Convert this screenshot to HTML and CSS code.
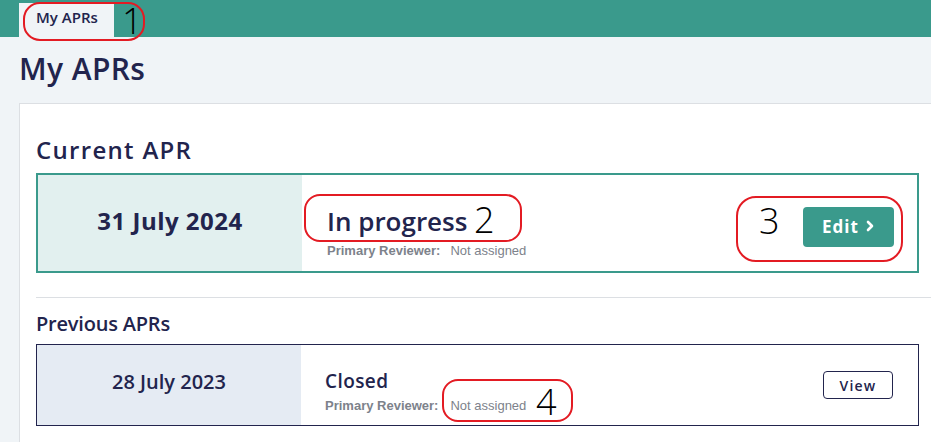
FILE: index.html
```html
<!DOCTYPE html>
<html>
<head>
<meta charset="utf-8">
<link rel="stylesheet" href="styles.css">
</head>
<body>
<header class="topbar">
  <div class="tab">My APRs</div>
  <div class="note note1"><span class="num">1</span></div>
</header>
<main class="page">
  <h1 class="title">My APRs</h1>
  <section class="card">
    <h2 class="section-title">Current APR</h2>
    <div class="apr apr-current">
      <div class="apr-date">31 July 2024</div>
      <div class="apr-info">
        <div class="status status-big">In progress</div>
        <div class="reviewer"><span class="label">Primary Reviewer:</span><span class="value">Not assigned</span></div>
      </div>
      <div class="apr-action">
        <button class="btn-edit">Edit
          <svg class="chev" width="10" height="12" viewBox="0 0 10 12"><path d="M3 2 L7 6 L3 10" fill="none" stroke="#fff" stroke-width="2.6" stroke-linecap="round" stroke-linejoin="round"/></svg>
        </button>
      </div>
      <div class="note note2"><span class="num">2</span></div>
      <div class="note note3"><span class="num">3</span></div>
    </div>
    <hr class="divider">
    <h3 class="sub-title">Previous APRs</h3>
    <div class="apr apr-prev">
      <div class="apr-date">28 July 2023</div>
      <div class="apr-info">
        <div class="status">Closed</div>
        <div class="reviewer"><span class="label">Primary Reviewer:</span><span class="value">Not assigned</span></div>
      </div>
      <div class="apr-action">
        <button class="btn-view">View</button>
      </div>
      <div class="note note4"><span class="num">4</span></div>
    </div>
  </section>
</main>
</body>
</html>
```

FILE: styles.css
```css
html, body {
  margin: 0;
  padding: 0;
}
body {
  background: #f0f4f7;
  font-family: "Open Sans", "DejaVu Sans", sans-serif;
  color: #22244d;
  width: 931px;
  height: 442px;
  overflow: hidden;
}
.topbar {
  position: relative;
  height: 37px;
  background: #3a9a8c;
  padding-left: 19px;
  display: flex;
  align-items: flex-end;
}
.tab {
  background: #f0f4f7;
  height: 34px;
  width: 95px;
  box-sizing: border-box;
  padding: 4px 0 0 17px;
  font-size: 15px;
  line-height: 20px;
  font-weight: 600;
  color: #22244d;
}
.page {
  padding-left: 19px;
}
.title {
  margin: 0;
  padding-top: 12px;
  height: 54px;
  font-size: 30px;
  font-weight: 600;
  line-height: 40px;
  letter-spacing: 0.4px;
}
.card {
  background: #fff;
  border: 1px solid #dcdfe3;
  border-right: none;
  width: 918px;
  box-sizing: border-box;
  padding: 30px 18px 0 16px;
  height: 360px;
}
.section-title {
  margin: 0;
  font-size: 24px;
  font-weight: 600;
  line-height: 32px;
  height: 39px;
  letter-spacing: 1.3px;
}
.apr {
  position: relative;
  display: flex;
  box-sizing: border-box;
}
.apr-current {
  border: 2px solid #3a9a8c;
  height: 100px;
}
.apr-prev {
  border: 1px solid #22244d;
  height: 82px;
}
.apr-date {
  width: 264px;
  flex: none;
  display: flex;
  align-items: center;
  justify-content: center;
}
.apr-current .apr-date {
  background: #e2f0ef;
  font-size: 24px;
  font-weight: 700;
  letter-spacing: 0.5px;
  padding-bottom: 5px;
}
.apr-prev .apr-date {
  background: #e5ebf3;
  font-size: 20px;
  font-weight: 600;
  padding-bottom: 8px;
}
.apr-info {
  flex: 1;
  display: flex;
  flex-direction: column;
}
.apr-current .apr-info {
  padding: 31px 0 0 25px;
}
.apr-prev .apr-info {
  padding: 24px 0 0 24px;
}
.status {
  font-size: 19px;
  font-weight: 600;
  line-height: 24px;
  letter-spacing: 0.4px;
}
.status-big {
  font-size: 26px;
  font-weight: 600;
  line-height: 30px;
  letter-spacing: 0;
}
.reviewer {
  font-family: "Liberation Sans", Arial, sans-serif;
  font-size: 13px;
  color: #7d828b;
  line-height: 16px;
}
.apr-current .reviewer {
  margin-top: 7px;
}
.apr-prev .reviewer {
  margin-top: 5px;
}
.reviewer .label {
  font-weight: 700;
  margin-right: 10px;
}
.apr-prev .reviewer .label {
  margin-right: 12px;
}
.apr-action {
  display: flex;
}
.apr-current .apr-action {
  align-items: flex-start;
  padding: 32px 23px 0 0;
}
.apr-prev .apr-action {
  align-items: center;
  padding-right: 25px;
}
.btn-edit {
  background: #3a9a8c;
  color: #fff;
  border: none;
  border-radius: 4px;
  width: 91px;
  height: 40px;
  font-family: inherit;
  font-size: 17px;
  font-weight: 700;
  letter-spacing: 1px;
  display: flex;
  align-items: center;
  justify-content: center;
  gap: 6px;
  padding: 0 0 2px 0;
}
.btn-view {
  background: #fff;
  color: #22244d;
  border: 1px solid #22244d;
  border-radius: 4px;
  width: 70px;
  height: 28px;
  font-family: inherit;
  font-size: 14px;
  font-weight: 600;
  letter-spacing: 1.2px;
  padding: 0;
}
.divider {
  border: none;
  border-top: 1px solid #dcdfe3;
  margin: 24px -18px 0 0;
}
.sub-title {
  margin: 0;
  padding-top: 13px;
  height: 33px;
  font-size: 20px;
  font-weight: 600;
  line-height: 26px;
  letter-spacing: -0.2px;
}
.note {
  position: absolute;
  border: 2px solid #e31b23;
  border-radius: 16px;
  box-sizing: border-box;
  font-family: "Open Sans", "Liberation Sans", sans-serif;
  font-weight: 300;
  color: #000;
  font-size: 36px;
  line-height: 34px;
}
.num {
  display: block;
}
.note1 {
  left: 23px;
  top: 2px;
  width: 122px;
  height: 39px;
  border-radius: 17px;
  padding: 2px 0 0 97px;
  line-height: 30px;
}
.note2 {
  left: 266px;
  top: 19px;
  width: 218px;
  height: 48px;
  padding: 7px 0 0 168px;
}
.note3 {
  left: 698px;
  top: 21px;
  width: 167px;
  height: 66px;
  border-radius: 20px;
  padding: 6px 0 0 21px;
}
.note4 {
  left: 405px;
  top: 34px;
  width: 131px;
  height: 43px;
  padding: 4px 0 0 92px;
}
```
